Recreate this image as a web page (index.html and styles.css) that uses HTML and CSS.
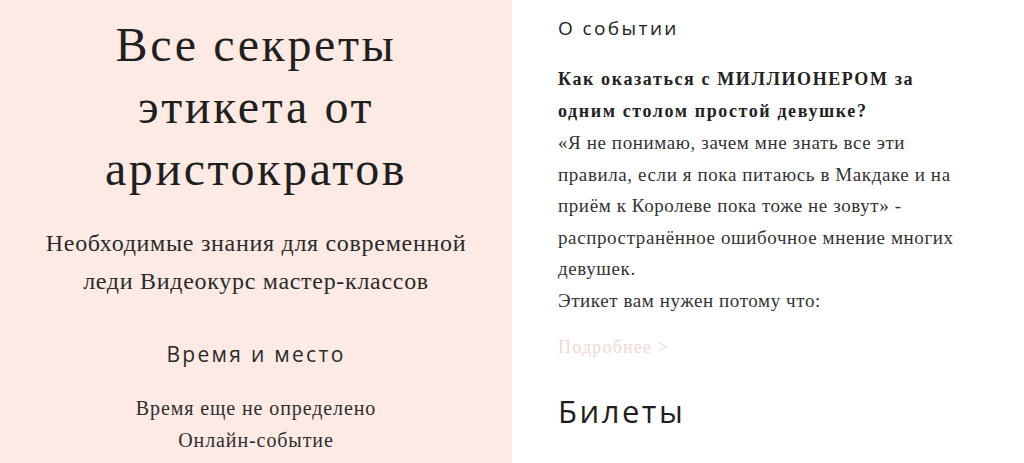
FILE: index.html
```html
<!DOCTYPE html>
<html lang="ru">
<head>
<meta charset="utf-8">
<link rel="stylesheet" href="styles.css">
</head>
<body>
<div class="page">
  <section class="hero">
    <h1 class="title">Все секреты<br>этикета от<br>аристократов</h1>
    <p class="lead">Необходимые знания для современной<br>леди Видеокурс мастер-классов</p>
    <h2 class="sub">Время и место</h2>
    <p class="info">Время еще не определено<br>Онлайн-событие</p>
  </section>
  <section class="about">
    <h2 class="about-title">О событии</h2>
    <div class="text">
      <p class="strong">Как оказаться с МИЛЛИОНЕРОМ за<br>одним столом простой девушке?</p>
      <p>«Я не понимаю, зачем мне знать все эти<br>правила, если я пока питаюсь в Макдаке и на<br>приём к Королеве пока тоже не зовут» -<br>распространённое ошибочное мнение многих<br>девушек.</p>
      <p>Этикет вам нужен потому что:</p>
    </div>
    <a class="more" href="#">Подробнее &gt;</a>
    <h2 class="tickets">Билеты</h2>
  </section>
</div>
</body>
</html>
```
FILE: styles.css
```css
html, body {
  margin: 0;
  padding: 0;
  background: #fff;
}
.page {
  display: flex;
  width: 1024px;
  height: 463px;
  overflow: hidden;
}
.hero {
  width: 512px;
  flex: none;
  background: #fdeae5;
  text-align: center;
  padding-top: 14px;
  box-sizing: border-box;
  color: #1f1f1f;
}
.title {
  margin: 0;
  font-family: "Liberation Serif", serif;
  font-weight: normal;
  font-size: 48px;
  line-height: 62px;
  letter-spacing: 2.6px;
}
.lead {
  margin: 24px 0 0;
  font-family: "Liberation Serif", serif;
  font-size: 24px;
  line-height: 38px;
  letter-spacing: 0.7px;
  color: #2a2a2a;
}
.sub {
  margin: 39px 0 0;
  font-family: "Open Sans", sans-serif;
  font-weight: normal;
  font-size: 21px;
  line-height: 30px;
  letter-spacing: 2.3px;
  color: #2a2a2a;
}
.info {
  margin: 23px 0 0;
  font-family: "Liberation Serif", serif;
  font-size: 20px;
  line-height: 32px;
  letter-spacing: 0.9px;
  color: #2e2e2e;
}
.about {
  flex: 1;
  padding: 10px 0 0 46px;
  color: #2a2a2a;
}
.about-title {
  margin: 0;
  font-family: "Open Sans", sans-serif;
  font-weight: normal;
  font-size: 19px;
  line-height: 36px;
  letter-spacing: 2.4px;
  color: #222;
}
.text {
  margin-top: 18px;
  font-family: "Liberation Serif", serif;
  font-size: 19px;
  line-height: 31.5px;
  letter-spacing: 0.6px;
  color: #333;
}
.text p {
  margin: 0;
}
.text .strong {
  font-size: 18px;
  font-weight: bold;
  color: #222;
  letter-spacing: 1.6px;
}
.more {
  display: block;
  margin-top: 19px;
  font-family: "Liberation Serif", serif;
  font-size: 18px;
  line-height: 24px;
  letter-spacing: 1.2px;
  color: #f2d8d1;
  text-decoration: none;
}
.tickets {
  margin: 30px 0 0;
  font-family: "Open Sans", sans-serif;
  font-weight: normal;
  font-size: 31px;
  line-height: 44px;
  letter-spacing: 2.5px;
  color: #1f1f1f;
}
```
